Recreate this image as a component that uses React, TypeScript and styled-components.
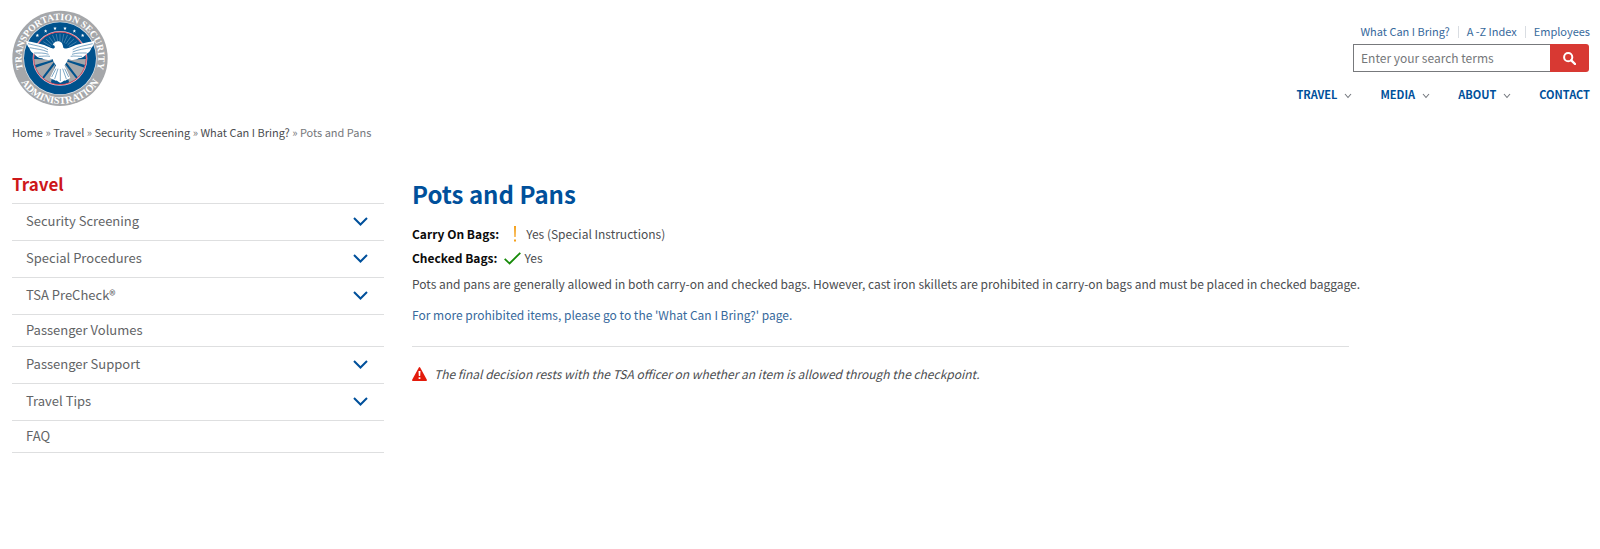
import React from "react";
import styled, { createGlobalStyle } from "styled-components";

const BLUE = "#00509b";
const LINK = "#37699c";
const RULE = "#dedfe0";

const GlobalStyle = createGlobalStyle`
  *, *::before, *::after { box-sizing: border-box; }
  body {
    margin: 0;
    background: #fff;
    color: #4b4d50;
    font-family: "Noto Sans CJK SC", "Liberation Sans", sans-serif;
    font-size: 12px;
    line-height: 20px;
  }
  a { color: inherit; text-decoration: none; }
  a:hover { text-decoration: underline; }
  ul, ol, dl, dd, h1, h2, p { margin: 0; padding: 0; }
  ul, ol { list-style: none; }
`;

const Page = styled.div`
  padding: 10px 10px 40px 12px;
`;

const Header = styled.header`
  display: flex;
  justify-content: space-between;
  align-items: flex-start;
`;

const LogoLink = styled.a`
  display: block;
  svg { display: block; }
`;

const HeaderTools = styled.div`
  display: flex;
  flex-direction: column;
  align-items: flex-end;
  padding-top: 11px;
`;

const UtilityLinks = styled.ul`
  display: flex;
  color: ${LINK};
  font-size: 11px;
  li + li::before {
    content: "";
    display: inline-block;
    width: 1px;
    height: 12px;
    margin: 0 8px;
    background: #d9dde2;
    vertical-align: -2px;
  }
`;

const SearchForm = styled.form`
  display: flex;
  width: 236px;
  height: 28px;
  margin: 3px 1px 0 0;
`;

const SearchInput = styled.input`
  flex: 1;
  min-width: 0;
  padding: 0 7px;
  border: 1px solid #77797c;
  border-right: 0;
  border-radius: 0;
  font: inherit;
  color: #4b4d50;
  &::placeholder { color: #75777a; opacity: 1; }
`;

const SearchButton = styled.button`
  display: flex;
  align-items: center;
  justify-content: center;
  width: 39px;
  padding: 0;
  border: 0;
  border-radius: 0 3px 3px 0;
  background: #d83933;
  color: #fff;
`;

const MainNav = styled.nav`
  margin-top: 12px;
  ul { display: flex; gap: 28px; }
`;

const NavLink = styled.a`
  display: flex;
  align-items: center;
  gap: 7px;
  color: ${BLUE};
  font-size: 11px;
  font-weight: 700;
`;

const NavChevron = styled.span`
  display: flex;
  padding-top: 4px;
  color: #74787e;
`;

const Breadcrumb = styled.nav`
  margin-top: 15px;
  font-size: 11px;
  color: #75777b;
  a { color: #4b4d50; }
`;

const Columns = styled.div`
  display: grid;
  grid-template-columns: 372px minmax(0, 1fr);
  gap: 28px;
  margin-top: 30px;
`;

const SideTitle = styled.h2`
  padding: 0 0 7px;
  color: #cd1719;
  font-size: 17px;
  line-height: 24px;
`;

const SideList = styled.ul`
  border-top: 1px solid ${RULE};
`;

const SideItem = styled.li<{ $expandable?: boolean }>`
  display: flex;
  align-items: center;
  justify-content: space-between;
  height: ${(p) => (p.$expandable ? 37 : 32)}px;
  padding: 0 16px 2px 14px;
  border-bottom: 1px solid ${RULE};
  color: #626466;
  font-size: 13px;
`;

const ToggleButton = styled.button`
  display: flex;
  padding: 0;
  border: 0;
  background: none;
  color: ${BLUE};
`;

const Title = styled.h1`
  padding-top: 4px;
  color: ${BLUE};
  font-size: 24px;
  line-height: 36px;
`;

const Permissions = styled.dl`
  margin-top: 10px;
`;

const Permission = styled.div`
  display: flex;
  align-items: center;
  height: 24px;
  dt { color: #0b0b0b; font-weight: 700; }
  dd { display: flex; align-items: center; }
`;

const MarkSlot = styled.span`
  display: flex;
  justify-content: center;
  width: 17px;
  margin: 0 3px 0 7px;
`;

const Description = styled.p`
  margin-top: 4px;
`;

const MoreLink = styled.p`
  margin-top: 11px;
  color: ${LINK};
`;

const Divider = styled.hr`
  margin: 21px 241px 17px 0;
  border: 0;
  border-top: 1px solid ${RULE};
`;

const Notice = styled.p`
  display: flex;
  align-items: center;
  gap: 7px;
  font-style: italic;
`;

function Seal() {
  const stars: [number, number][] = [
    [112, 105], [137, 92], [165, 84], [195, 84], [223, 92], [248, 105],
  ];
  const rays = Array.from({ length: 15 }, (_, i) => Math.PI * (1.1 + i * 0.0571));
  return (
    <svg width="96" height="97" viewBox="36 29 288 291" role="img" aria-label="Transportation Security Administration">
      <defs>
        <path id="seal-top" d="M65 174a115 115 0 0 1 230 0a115 115 0 0 1 -230 0" transform="rotate(-90 180 174)" />
        <path id="seal-bottom" d="M43 174a137 137 0 0 0 274 0" />
        <clipPath id="seal-disc"><circle cx="180" cy="174" r="78" /></clipPath>
      </defs>
      <circle cx="180" cy="174" r="143" fill="#a5a7aa" />
      <circle cx="180" cy="174" r="110" fill="#dfe6ec" />
      <circle cx="180" cy="174" r="108" fill="#00528d" />
      <g fill="#fff" fontFamily='"Liberation Serif", serif' fontWeight="700" textAnchor="middle">
        <text fontSize="29"><textPath href="#seal-top" startOffset="50%">TRANSPORTATION SECURITY</textPath></text>
        <text fontSize="31"><textPath href="#seal-bottom" startOffset="50%">ADMINISTRATION</textPath></text>
      </g>
      <g stroke="#7fa8c6" strokeWidth="1.5">
        {rays.map((a) => (
          <line key={a} x1={180 + 34 * Math.cos(a)} y1={160 + 34 * Math.sin(a)} x2={180 + 64 * Math.cos(a)} y2={164 + 64 * Math.sin(a)} />
        ))}
      </g>
      <g fill="#a5a7aa" clipPath="url(#seal-disc)">
        <path d="M160 178L98 176V196Z" />
        <path d="M164 182L96 206L120 240Z" />
        <path d="M166 190L124 244L150 258Z" />
        <path d="M200 178L262 176V196Z" />
        <path d="M196 182L264 206L240 240Z" />
        <path d="M194 190L236 244L210 258Z" />
      </g>
      <circle cx="180" cy="174" r="80" fill="none" stroke="#e9c9d2" strokeWidth="4" />
      <circle cx="180" cy="174" r="79" fill="none" stroke="#cf3347" strokeWidth="2.5" />
      {stars.map(([x, y]) => (
        <path key={x} fill="#fff" d={`M${x} ${y - 5}l1.5 3.5h3.5l-2.7 2.5 1 4-3.3-2.4-3.3 2.4 1-4-2.7-2.5h3.5z`} />
      ))}
      <path
        fill="#fff"
        d="M78 121C100 127 130 130 148 141C156 145 160 146 164 142C166 138 162 134 158 134C161 126 171 121 180 124C188 127 189 136 190 142C196 146 204 145 212 141C230 130 262 127 284 121C282 131 279 138 274 143C272 151 267 157 260 160C254 168 246 173 236 174C226 181 212 180 204 176C202 184 197 190 194 195L211 232C206 238 200 236 197 241C192 238 188 247 181 247C175 247 171 238 166 241C162 236 156 238 150 232L168 195C164 190 160 184 158 176C150 180 136 181 126 174C116 173 108 168 102 160C95 157 90 151 88 143C83 138 80 131 78 121Z"
      />
      <g fill="none" stroke="#00528d" strokeWidth="1.5">
        <path d="M84 130C106 136 128 138 144 148M89 142C108 146 128 147 144 155M102 158C118 158 132 157 146 162M116 168C128 168 138 166 150 168" />
        <path d="M278 130C256 136 234 138 218 148M273 142C254 146 234 147 218 155M260 158C244 158 230 157 216 162M246 168C234 168 224 166 212 168" />
        <path d="M174 205L164 236M181 206V242M188 205L199 236M168 205L155 230M194 205L206 230" />
      </g>
    </svg>
  );
}

function Chevron({ width, height, stroke }: { width: number; height: number; stroke: number }) {
  return (
    <svg width={width} height={height} viewBox={`0 0 ${width} ${height}`} fill="none" stroke="currentColor" strokeWidth={stroke} aria-hidden="true">
      <path d={`M1 1L${width / 2} ${height - 1.5}L${width - 1} 1`} />
    </svg>
  );
}

const navItems = [
  { label: "TRAVEL", menu: true },
  { label: "MEDIA", menu: true },
  { label: "ABOUT", menu: true },
  { label: "CONTACT", menu: false },
];

const sideItems = [
  { label: "Security Screening", expandable: true },
  { label: "Special Procedures", expandable: true },
  { label: "TSA PreCheck®", expandable: true },
  { label: "Passenger Volumes", expandable: false },
  { label: "Passenger Support", expandable: true },
  { label: "Travel Tips", expandable: true },
  { label: "FAQ", expandable: false },
];

const crumbs = ["Home", "Travel", "Security Screening", "What Can I Bring?"];

export default function App() {
  return (
    <Page>
      <GlobalStyle />
      <Header>
        <LogoLink href="#home"><Seal /></LogoLink>
        <HeaderTools>
          <UtilityLinks>
            <li><a href="#bring">What Can I Bring?</a></li>
            <li><a href="#index">A -Z Index</a></li>
            <li><a href="#employees">Employees</a></li>
          </UtilityLinks>
          <SearchForm role="search" onSubmit={(e) => e.preventDefault()}>
            <SearchInput type="text" aria-label="Enter your search terms" placeholder="Enter your search terms" />
            <SearchButton type="submit" aria-label="Search">
              <svg width="13" height="13" viewBox="0 0 13 13" fill="none" stroke="currentColor" aria-hidden="true">
                <circle cx="5.2" cy="5.2" r="4.1" strokeWidth="2" />
                <path d="M8.3 8.3L12 12" strokeWidth="2.4" strokeLinecap="round" />
              </svg>
            </SearchButton>
          </SearchForm>
          <MainNav aria-label="Main">
            <ul>
              {navItems.map((item) => (
                <li key={item.label}>
                  <NavLink href={`#${item.label.toLowerCase()}`}>
                    {item.label}
                    {item.menu && <NavChevron><Chevron width={8} height={6} stroke={1.1} /></NavChevron>}
                  </NavLink>
                </li>
              ))}
            </ul>
          </MainNav>
        </HeaderTools>
      </Header>

      <Breadcrumb aria-label="Breadcrumb">
        {crumbs.map((c) => (
          <React.Fragment key={c}><a href="#crumb">{c}</a> » </React.Fragment>
        ))}
        <span aria-current="page">Pots and Pans</span>
      </Breadcrumb>

      <Columns>
        <aside>
          <SideTitle>Travel</SideTitle>
          <SideList>
            {sideItems.map((item) => (
              <SideItem key={item.label} $expandable={item.expandable}>
                <a href="#section">{item.label}</a>
                {item.expandable && (
                  <ToggleButton type="button" aria-label={`Expand ${item.label}`}>
                    <Chevron width={15} height={9} stroke={2} />
                  </ToggleButton>
                )}
              </SideItem>
            ))}
          </SideList>
        </aside>

        <main>
          <Title>Pots and Pans</Title>
          <Permissions>
            <Permission>
              <dt>Carry On Bags:</dt>
              <dd>
                <MarkSlot>
                  <svg width="4" height="16" viewBox="0 0 4 16" fill="#f5a01a" aria-hidden="true">
                    <path d="M1 0h2l-.4 11h-1.2zM1 13.5h2v2h-2z" />
                  </svg>
                </MarkSlot>
                Yes (Special Instructions)
              </dd>
            </Permission>
            <Permission>
              <dt>Checked Bags:</dt>
              <dd>
                <MarkSlot>
                  <svg width="17" height="13" viewBox="0 0 17 13" fill="none" stroke="#168a08" strokeWidth="1.8" aria-hidden="true">
                    <path d="M.7 6.8L5.6 11.5L16.3 .8" />
                  </svg>
                </MarkSlot>
                Yes
              </dd>
            </Permission>
          </Permissions>
          <Description>
            Pots and pans are generally allowed in both carry-on and checked bags. However, cast iron skillets are prohibited in carry-on bags and must be placed in checked baggage.
          </Description>
          <MoreLink>
            <a href="#bring">For more prohibited items, please go to the 'What Can I Bring?' page.</a>
          </MoreLink>
          <Divider />
          <Notice>
            <svg width="15" height="14" viewBox="0 0 15 14" aria-hidden="true">
              <path d="M7.5 .8L14.2 13.2H.8Z" fill="#e31b0c" stroke="#e31b0c" strokeWidth="1.5" strokeLinejoin="round" />
              <path d="M6.5 4h2l-.3 5h-1.4zM6.6 10.2h1.8v1.8h-1.8z" fill="#fff" />
            </svg>
            The final decision rests with the TSA officer on whether an item is allowed through the checkpoint.
          </Notice>
        </main>
      </Columns>
    </Page>
  );
}
